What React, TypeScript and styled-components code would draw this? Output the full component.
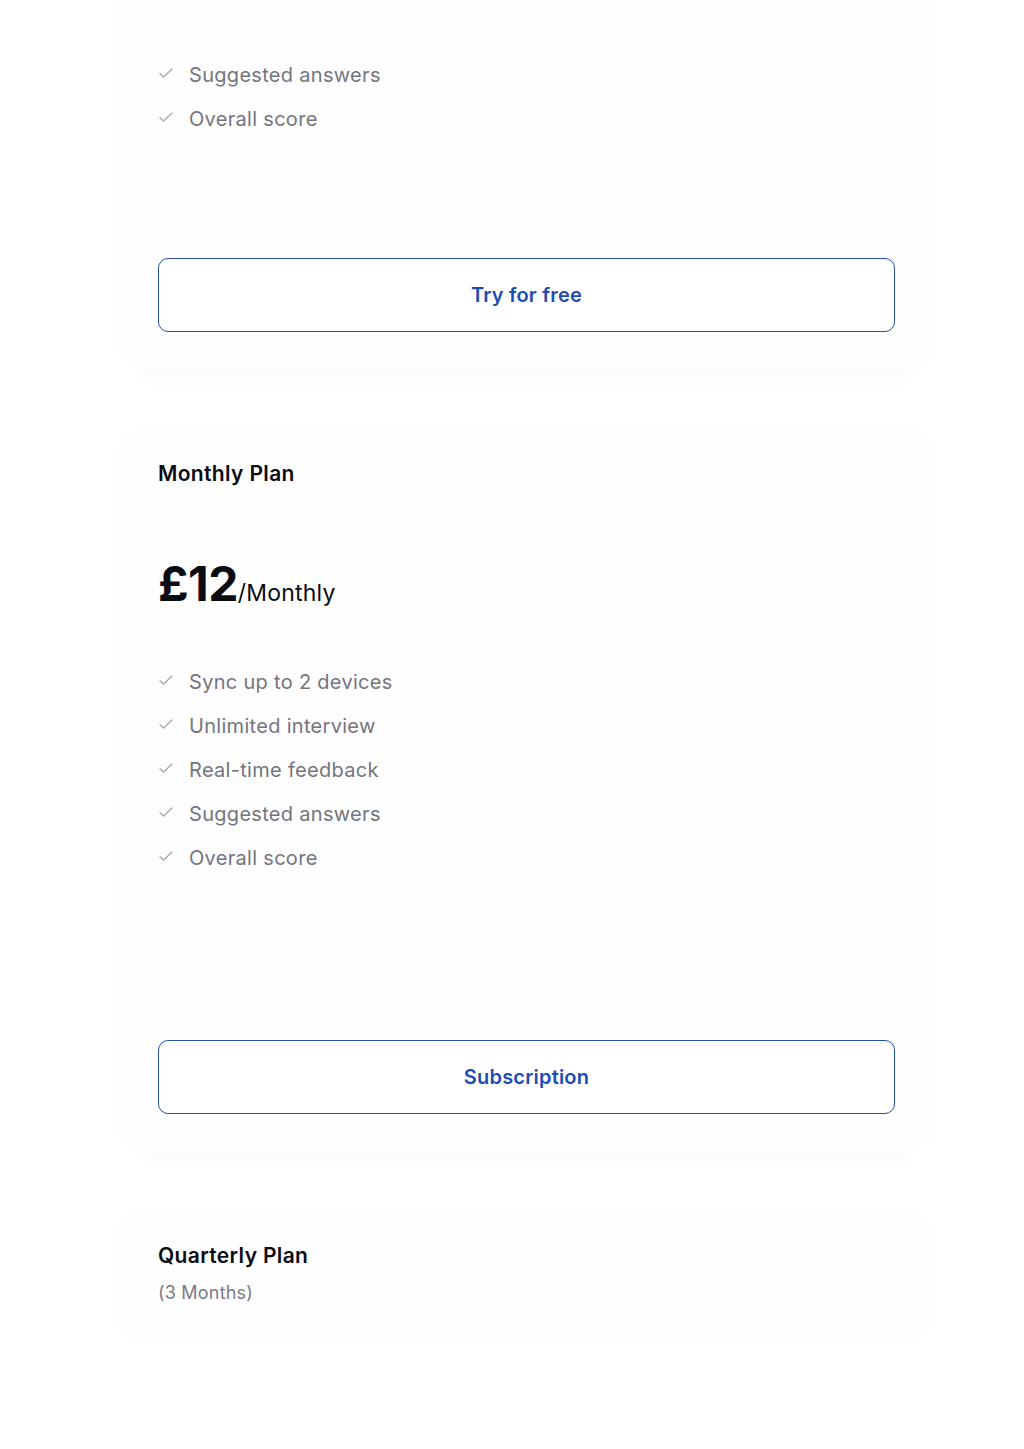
import styled, { createGlobalStyle } from "styled-components";

const GlobalStyle = createGlobalStyle`
  html, body {
    margin: 0;
    padding: 0;
    background: #ffffff;
  }
  body {
    font-family: Inter, "Noto Sans", "Liberation Sans", sans-serif;
    -webkit-font-smoothing: antialiased;
  }
  * {
    box-sizing: border-box;
  }
`;

const Page = styled.div`
  height: 1449px;
  overflow: hidden;
  padding-left: 118px;
  display: flex;
  flex-direction: column;
  gap: 62px;
`;

const Card = styled.div<{ $clipped?: boolean; $loading?: boolean; $height: number }>`
  width: 815px;
  min-height: ${(p) => p.$height}px;
  flex-shrink: 0;
  display: flex;
  flex-direction: column;
  padding: ${(p) => (p.$clipped ? "61px" : "32px")} 38px 36px 40px;
  background: #fefefe;
  border-radius: ${(p) => (p.$clipped ? "0 0 24px 24px" : "24px")};
  box-shadow: ${(p) =>
    p.$loading
      ? "0 0 10px rgba(20, 20, 60, 0.01)"
      : "0 0 14px rgba(20, 20, 60, 0.01), 0 38px 14px -24px rgba(20, 20, 60, 0.016)"};
`;

const PlanTitle = styled.h3`
  margin: 0;
  font-size: 21px;
  line-height: 24px;
  font-weight: 600;
  letter-spacing: 0.35px;
  color: #0b0b14;
`;

const PlanNote = styled.div`
  margin-top: 13px;
  min-height: 24px;
  font-size: 18px;
  line-height: 24px;
  letter-spacing: 0.2px;
  color: #7a7a84;
`;

const PriceRow = styled.div`
  margin-top: 33px;
  display: flex;
  align-items: baseline;
  color: #0b0b14;
  line-height: 56px;
`;

const Amount = styled.span`
  font-size: 48px;
  font-weight: 700;
  letter-spacing: -0.6px;
`;

const Period = styled.span`
  font-size: 23px;
  font-weight: 400;
  letter-spacing: 0.2px;
`;

const Features = styled.ul<{ $first?: boolean }>`
  list-style: none;
  margin: ${(p) => (p.$first ? "0" : "47px")} 0 0;
  padding: 0;
  display: flex;
  flex-direction: column;
  gap: 16px;
`;

const Feature = styled.li`
  display: flex;
  align-items: center;
  gap: 15px;
  font-size: 20px;
  line-height: 28px;
  color: #74747e;
  letter-spacing: 0.3px;
`;

const CheckIcon = styled.svg`
  width: 16px;
  height: 16px;
  flex-shrink: 0;
  margin-top: -4px;
`;

const PlanButton = styled.button`
  margin-top: auto;
  height: 74px;
  width: 100%;
  flex-shrink: 0;
  border: 1.5px solid #2450ad;
  border-radius: 10px;
  background: #ffffff;
  color: #1d4cb3;
  font-family: inherit;
  font-size: 20px;
  font-weight: 600;
  letter-spacing: 0.2px;
  cursor: pointer;
`;

const Check = () => (
  <CheckIcon viewBox="0 0 16 16" fill="none">
    <path
      d="M2 8.8 L5.6 12 L14 4"
      stroke="#a8a8b0"
      strokeWidth="1.4"
      strokeLinecap="round"
      strokeLinejoin="round"
    />
  </CheckIcon>
);

const FeatureList = ({ items, first }: { items: string[]; first?: boolean }) => (
  <Features $first={first}>
    {items.map((item) => (
      <Feature key={item}>
        <Check />
        {item}
      </Feature>
    ))}
  </Features>
);

const monthlyFeatures = [
  "Sync up to 2 devices",
  "Unlimited interview",
  "Real-time feedback",
  "Suggested answers",
  "Overall score",
];

export default function App() {
  return (
    <>
      <GlobalStyle />
      <Page>
        <Card $clipped $height={368}>
          <FeatureList first items={["Suggested answers", "Overall score"]} />
          <PlanButton>Try for free</PlanButton>
        </Card>

        <Card $height={720}>
          <PlanTitle>Monthly Plan</PlanTitle>
          <PlanNote />
          <PriceRow>
            <Amount>£12</Amount>
            <Period>/Monthly</Period>
          </PriceRow>
          <FeatureList items={monthlyFeatures} />
          <PlanButton>Subscription</PlanButton>
        </Card>

        <Card $loading $height={126}>
          <PlanTitle>Quarterly Plan</PlanTitle>
          <PlanNote>(3 Months)</PlanNote>
        </Card>
      </Page>
    </>
  );
}
